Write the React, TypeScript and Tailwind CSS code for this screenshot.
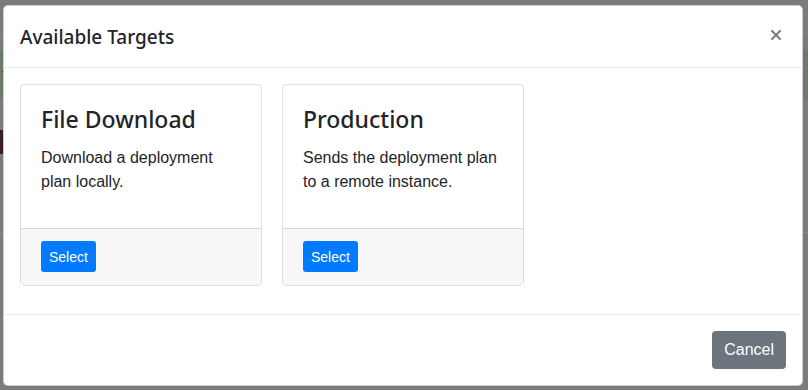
import { X } from "lucide-react";

const targets = [
  { name: "File Download", text: "Download a deployment plan locally." },
  { name: "Production", text: "Sends the deployment plan to a remote instance." },
];

export default function App() {
  return (
    <div
      className="relative h-[390px] w-[808px] overflow-hidden bg-[#7b7b7b]"
      style={{ fontFamily: '"Segoe UI", "Liberation Sans", Arial, sans-serif' }}
    >
      {/* page behind the backdrop */}
      <div className="h-[34px] border-b border-[#868686]" />
      <div className="h-[16px]" />
      <div className="h-[48px] bg-[#6c7a6c] pl-[2px] pt-[14px] text-sm text-[#2a2a22]">t</div>
      <div className="ml-0 mt-[32px] h-[24px] w-[4px] bg-[#3a1f22]" />
      <div className="mt-[78px] border-b border-[#888]" />

      {/* modal */}
      <div className="absolute left-[3px] top-[5px] flex w-[800px] flex-col rounded-[5px] border border-black/20 bg-white text-[#212529]">
        <div className="flex h-[62px] items-start justify-between border-b border-[#e9ecef] px-4 py-4">
          <h5 className="font-['Noto_Sans',sans-serif] text-[19px] leading-[30px] font-medium">Available Targets</h5>
          <button className="mt-[5px] mr-[2px] text-[#808080]">
            <X size={16} strokeWidth={3.2} />
          </button>
        </div>

        <div className="flex h-[246px] gap-5 p-4">
          {targets.map((t) => (
            <div key={t.name} className="flex h-[202px] w-[242px] flex-col rounded border border-black/[.125]">
              <div className="flex-1 px-5 pt-5">
                <h3 className="mb-3 font-['Noto_Sans',sans-serif] text-[23px] leading-[29px] font-medium">{t.name}</h3>
                <p className="text-base leading-6">{t.text}</p>
              </div>
              <div className="h-[57px] border-t border-black/[.125] bg-[#f7f7f7] px-5 py-3">
                <button className="h-[31px] rounded-[3px] bg-[#007bff] px-2 text-sm text-white">Select</button>
              </div>
            </div>
          ))}
        </div>

        <div className="flex justify-end border-t border-[#e9ecef] p-4">
          <button className="h-[38px] rounded bg-[#6c757d] px-3 text-base text-white">Cancel</button>
        </div>
      </div>
    </div>
  );
}
